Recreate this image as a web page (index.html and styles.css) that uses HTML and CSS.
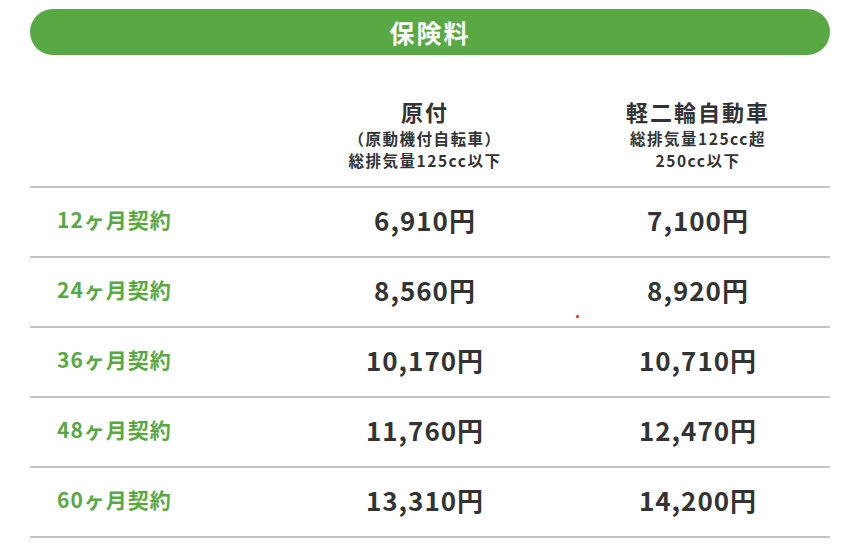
FILE: index.html
```html
<!DOCTYPE html>
<html lang="ja">
<head>
<meta charset="utf-8">
<link rel="stylesheet" href="styles.css">
</head>
<body>
<div class="wrap">
  <div class="title-bar">保険料</div>
  <div class="table">
    <div class="cell head-empty"></div>
    <div class="cell head">
      <div class="head-name">原付</div>
      <div class="head-sub">（原動機付自転車）</div>
      <div class="head-sub">総排気量125cc以下</div>
    </div>
    <div class="cell head">
      <div class="head-name">軽二輪自動車</div>
      <div class="head-sub">総排気量125cc超</div>
      <div class="head-sub">250cc以下</div>
    </div>

    <div class="cell label">12ヶ月契約</div>
    <div class="cell price">6,910円</div>
    <div class="cell price">7,100円</div>

    <div class="cell label">24ヶ月契約</div>
    <div class="cell price">8,560円</div>
    <div class="cell price">8,920円</div>

    <div class="cell label">36ヶ月契約</div>
    <div class="cell price">10,170円</div>
    <div class="cell price">10,710円</div>

    <div class="cell label">48ヶ月契約</div>
    <div class="cell price">11,760円</div>
    <div class="cell price">12,470円</div>

    <div class="cell label">60ヶ月契約</div>
    <div class="cell price">13,310円</div>
    <div class="cell price">14,200円</div>
  </div>
</div>
<span class="dot"></span>
</body>
</html>
```

FILE: styles.css
```css
* { box-sizing: border-box; }
html, body {
  margin: 0;
  padding: 0;
  background: #ffffff;
}
body {
  position: relative;
  font-family: "Noto Sans CJK JP", "Noto Sans", sans-serif;
  color: #333333;
}
.wrap {
  width: 868px;
  padding: 9px 38px 0 30px;
}
.title-bar {
  height: 46px;
  border-radius: 23px;
  background: #58a844;
  color: #ffffff;
  font-weight: 700;
  font-size: 25px;
  letter-spacing: 2px;
  line-height: 46px;
  text-align: center;
}
.table {
  display: grid;
  grid-template-columns: 254px 282px 264px;
}
.cell {
  border-bottom: 2px solid #c4c4c4;
}
.head, .head-empty {
  padding: 40px 0 15px;
}
.head {
  text-align: center;
}
.head-name {
  font-size: 22px;
  font-weight: 700;
  letter-spacing: 2px;
  line-height: 32px;
}
.head-sub {
  font-size: 15.5px;
  font-weight: 700;
  letter-spacing: 1.5px;
  line-height: 22px;
}
.label, .price {
  height: 70px;
  display: flex;
  align-items: center;
  padding-bottom: 6px;
}
.label {
  padding-left: 27px;
  color: #58a844;
  font-size: 21px;
  font-weight: 700;
  letter-spacing: 1px;
}
.price {
  justify-content: center;
  font-size: 26px;
  font-weight: 700;
  letter-spacing: 1px;
}
.dot {
  position: absolute;
  left: 576px;
  top: 315px;
  width: 3px;
  height: 3px;
  border-radius: 50%;
  background: #e02020;
}
```
